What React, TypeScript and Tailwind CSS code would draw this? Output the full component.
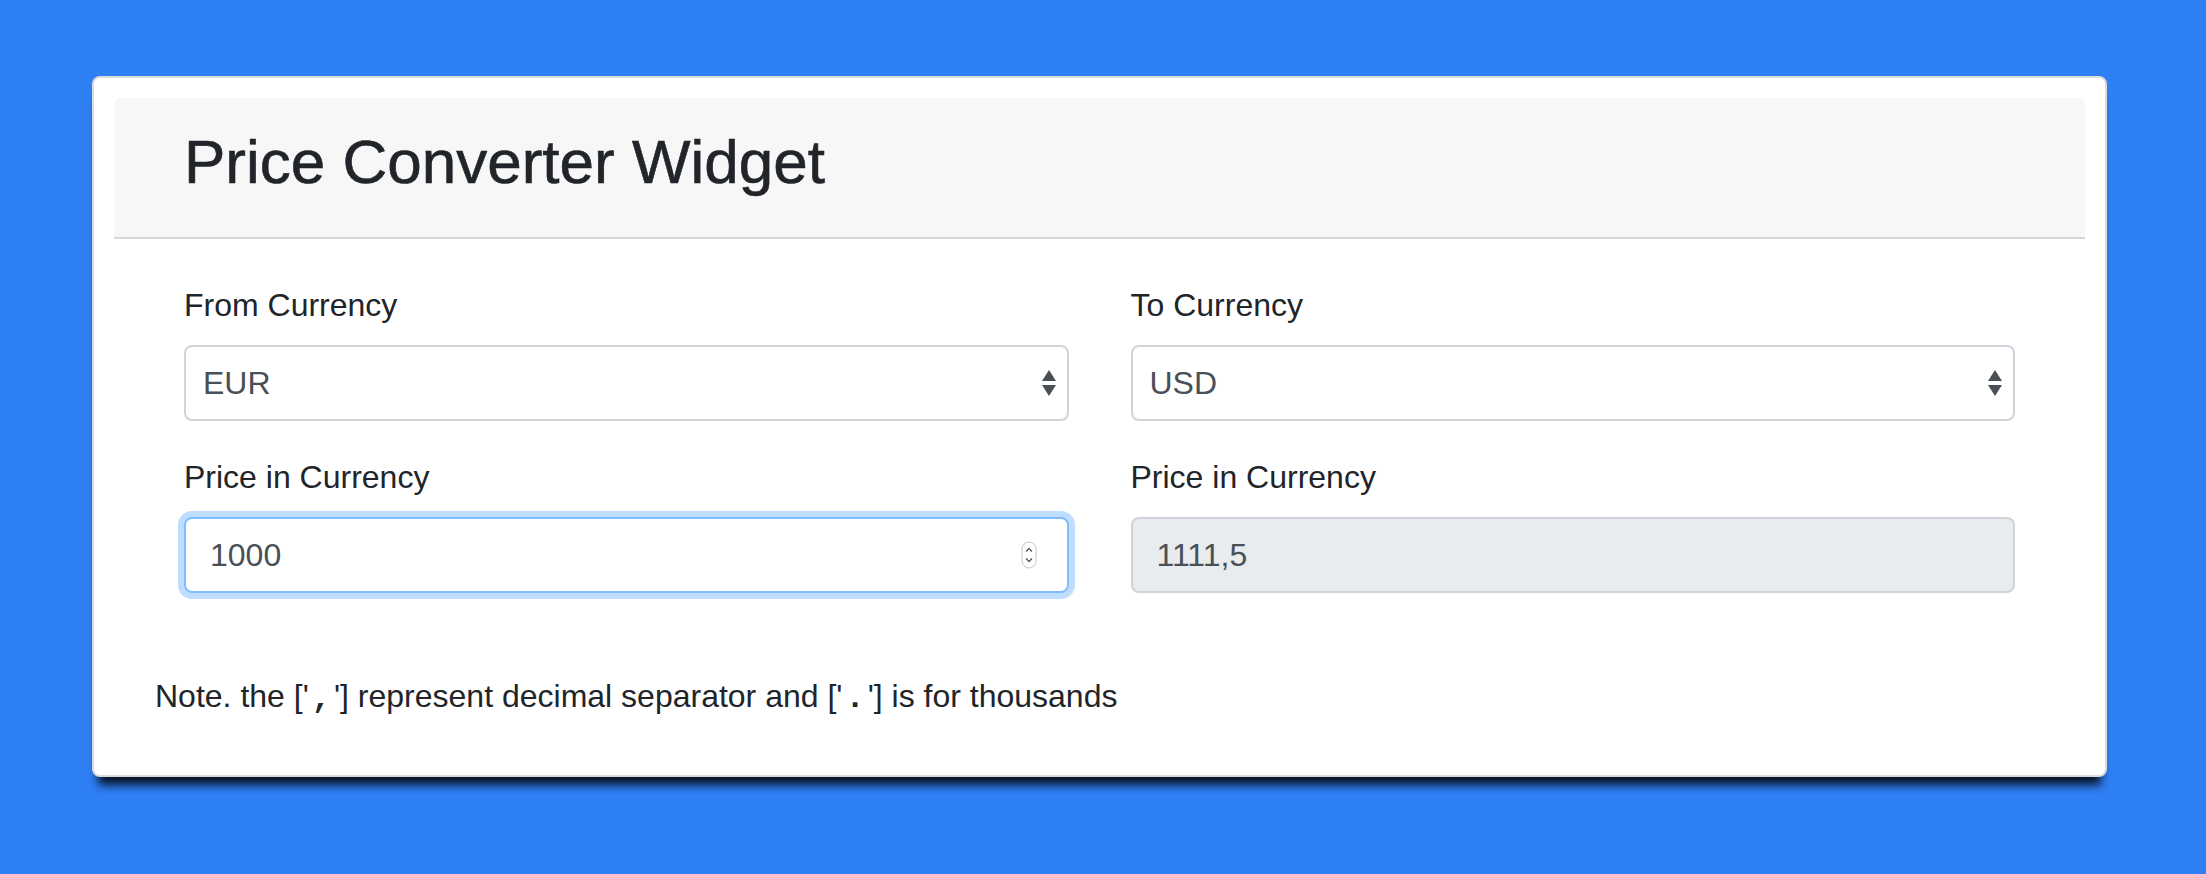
import React from 'react';

const font = { fontFamily: '"Liberation Sans", Arial, sans-serif' };

function SelectBox({ value }: { value: string }) {
  return (
    <div className="flex h-[76px] items-center justify-between rounded-[8px] border-2 border-[#ced4da] bg-white pl-[17px] pr-[8px] text-[32px] text-[#495057]">
      <span>{value}</span>
      <svg width="16" height="28" viewBox="0 0 16 28" className="mr-[2px]">
        <path d="M8 1 L15 12 L1 12 Z" fill="#4a4f55" />
        <path d="M1 16 L15 16 L8 27 Z" fill="#4a4f55" />
      </svg>
    </div>
  );
}

function Label({ children }: { children: React.ReactNode }) {
  return <div className="mb-[16px] text-[32px] leading-[48px] text-[#212529]">{children}</div>;
}

function Sep({ children }: { children: React.ReactNode }) {
  return <strong className="px-[3px] font-['Liberation_Mono',monospace] font-bold">{children}</strong>;
}

function App() {
  return (
    <div className="min-h-screen bg-[#2f7ff5] pt-[76px]" style={font}>
      <div className="ml-[92px] w-[2015px] rounded-[8px] border-2 border-[#dcdcdc] bg-white p-[20px] shadow-[0_14px_10px_-6px_rgba(0,0,0,0.85)]">
        <div className="flex h-[141px] items-center rounded-t-[6px] border-b-2 border-[#d6d6d6] bg-[#f7f7f7] pl-[70px]">
          <h1 className="pb-[12px] text-[62px] font-medium leading-none text-[#212529] [-webkit-text-stroke:0.6px_#212529]">Price Converter Widget</h1>
        </div>

        <div className="grid grid-cols-2 gap-x-[62px] px-[70px] pt-[42px]">
          <div>
            <Label>From Currency</Label>
            <SelectBox value="EUR" />
          </div>
          <div>
            <Label>To Currency</Label>
            <SelectBox value="USD" />
          </div>

          <div className="mt-[32px]">
            <Label>Price in Currency</Label>
            <div className="relative flex h-[76px] items-center rounded-[8px] border-2 border-[#80bdff] bg-white pl-[24px] text-[32px] text-[#495057] shadow-[0_0_0_6px_rgba(0,123,255,0.25)]">
              <span>1000</span>
              <svg width="16" height="28" viewBox="0 0 16 28" className="absolute right-[30px] top-[22px]">
                <rect x="1" y="1" width="14" height="26" rx="7" fill="white" stroke="#c4c4c4" strokeWidth="1" />
                <path d="M5 10.5 L8 7.5 L11 10.5" fill="none" stroke="#555" strokeWidth="1.3" />
                <path d="M5 17.5 L8 20.5 L11 17.5" fill="none" stroke="#555" strokeWidth="1.3" />
              </svg>
            </div>
          </div>
          <div className="mt-[32px]">
            <Label>Price in Currency</Label>
            <div className="flex h-[76px] items-center rounded-[8px] border-2 border-[#ced4da] bg-[#e9ecef] pl-[24px] text-[32px] text-[#495057]">
              1111,5
            </div>
          </div>
        </div>

        <p className="mt-[79px] pb-[32px] pl-[41px] text-[32px] leading-[48px] text-[#212529]">
          Note. the ['<Sep>,</Sep>'] represent decimal separator and ['<Sep>.</Sep>'] is for thousands
        </p>
      </div>
    </div>
  );
}

export default App;
